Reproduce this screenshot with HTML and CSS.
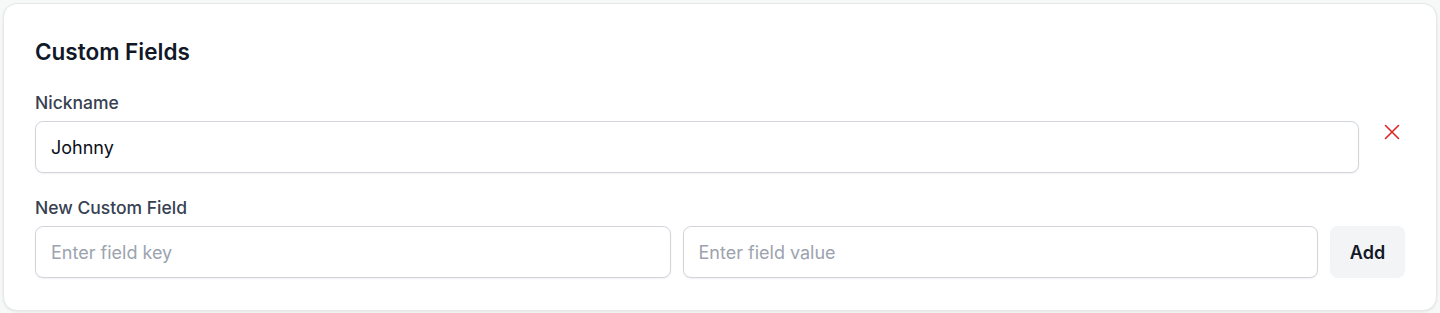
FILE: index.html
```html
<!DOCTYPE html>
<html lang="en">
<head>
    <meta charset="UTF-8">
    <meta name="viewport" content="width=device-width, initial-scale=1.0">
    <title>Custom Fields</title>
    <link rel="stylesheet" href="styles.css">
</head>
<body>
    <div class="card">
        <h2 class="title">Custom Fields</h2>

        <div class="field">
            <label class="label" for="nickname">Nickname</label>
            <div class="row">
                <input class="input" id="nickname" type="text" value="Johnny">
                <button class="remove" title="Remove">
                    <svg width="16" height="16" viewBox="0 0 16 16" fill="none" stroke="#dc2626" stroke-width="1.6" stroke-linecap="round">
                        <path d="M1.5 1.5 L14.5 14.5 M14.5 1.5 L1.5 14.5"/>
                    </svg>
                </button>
            </div>
        </div>

        <div class="field">
            <label class="label">New Custom Field</label>
            <div class="row">
                <input class="input" type="text" placeholder="Enter field key">
                <input class="input" type="text" placeholder="Enter field value">
                <button class="add">Add</button>
            </div>
        </div>
    </div>
</body>
</html>
```

FILE: styles.css
```css
*{ box-sizing: border-box;}
body{
    margin:0;
    padding:3px;
    background:#f7f8f8;
    font-family: Inter, "Noto Sans", sans-serif;
    color:#111827;
}
.card{
    background:#fff;
    border:1px solid #e5e7eb;
    border-radius:14px;
    box-shadow:0 1px 3px rgba(0,0,0,0.08);
    padding:32px 31px 31px;
    height:308px;
}
.title{
    margin:0 0 23px;
    font-size:22.5px;
    line-height:32px;
    font-weight:600;
    color:#111827;
}
.field + .field{
    margin-top:23px;
}
.label{
    display:block;
    font-size:17.5px;
    line-height:24px;
    font-weight:500;
    color:#374151;
    margin-bottom:6px;
}
.row{
    display:flex;
    gap:12px;
    align-items:flex-start;
}
.input{
    flex:1;
    min-width:0;
    height:52px;
    border:1px solid #d1d5db;
    border-radius:8px;
    padding:0 15px;
    font-family:inherit;
    font-size:18px;
    color:#0b0f19;
    background:#fff;
    box-shadow:0 1px 2px rgba(0,0,0,0.06);
    outline:none;
}
.input::placeholder{
    color:#9ca3af;
}
.remove{
    width:26px;
    height:22px;
    margin-left:8px;
    padding:0;
    border:0;
    background:none;
    display:flex;
    align-items:center;
    justify-content:center;
    cursor:pointer;
}
.add{
    width:75px;
    height:52px;
    border:0;
    border-radius:8px;
    background:#f3f4f6;
    font-family:inherit;
    font-size:18px;
    font-weight:600;
    color:#111827;
    cursor:pointer;
}
```
